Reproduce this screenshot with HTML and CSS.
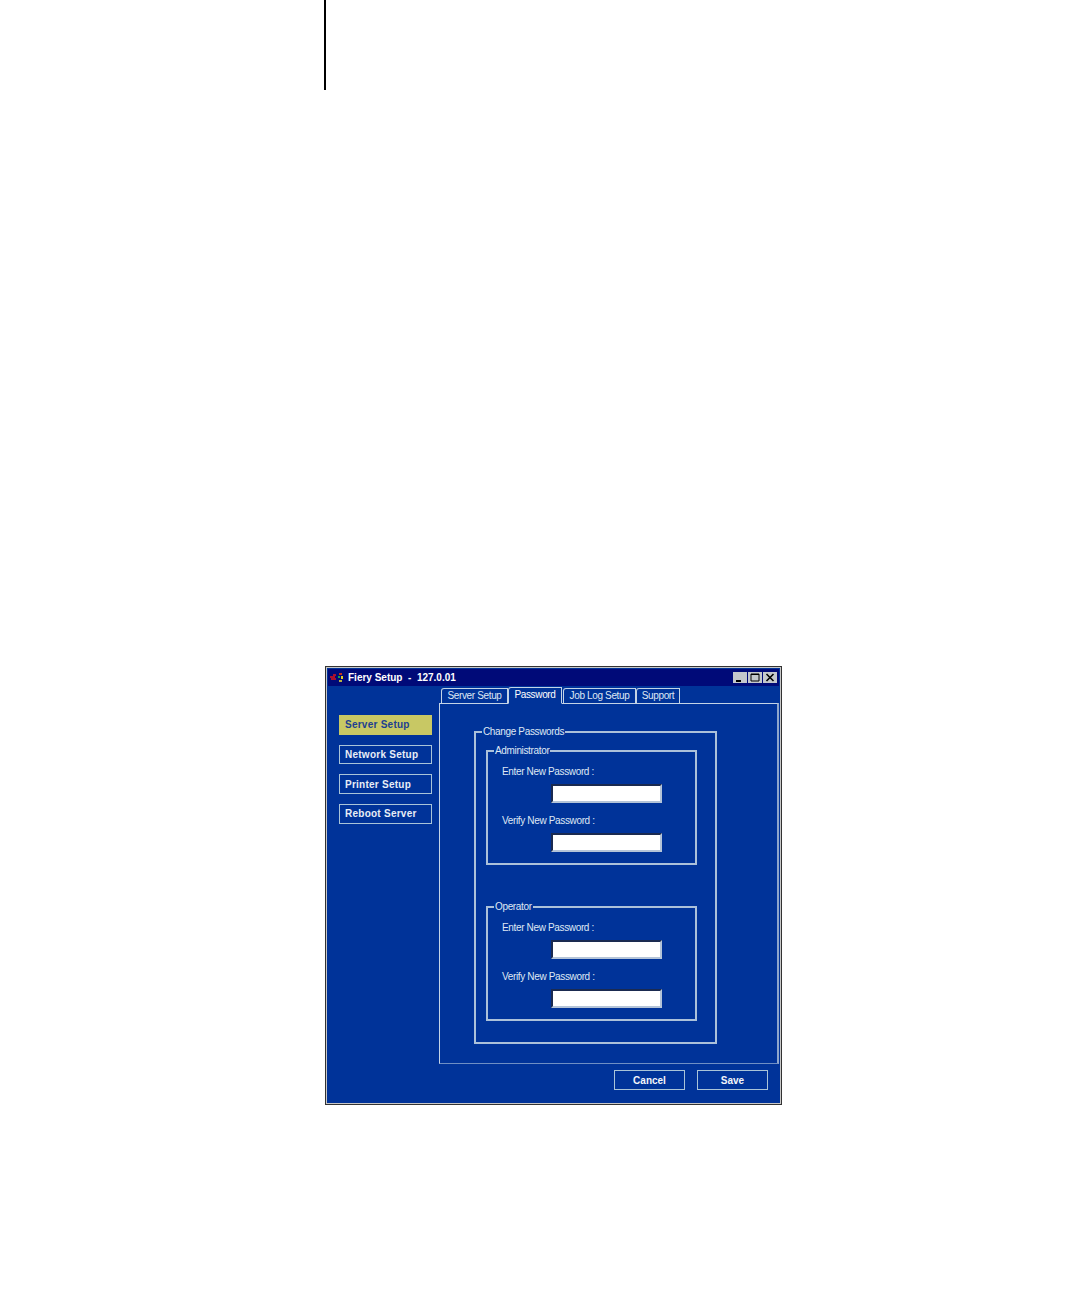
FILE: index.html
```html
<!DOCTYPE html>
<html lang="en">
<head>
    <meta charset="UTF-8">
    <title>Fiery Setup</title>
    <link rel="stylesheet" href="styles.css">
</head>
<body>
    <div class="crop-mark"></div>

    <div class="window">
        <div class="titlebar">
            <svg class="app-icon" width="16" height="11" viewBox="0 0 16 11">
                <path d="M1 5h5M2 7h5M4 3h3" stroke="#a81030" stroke-width="2" fill="none"/>
                <path d="M10 1h3v2h-3z" fill="#c03020"/>
                <path d="M9 4h2v2H9z" fill="#20a040"/>
                <path d="M12 4h2v3h-2z" fill="#e0d020"/>
                <path d="M10 8h3v2h-3z" fill="#b8b040"/>
            </svg>
            <span class="title">Fiery Setup&nbsp; -&nbsp; 127.0.01</span>
            <div class="win-buttons">
                <button class="win-btn">
                    <svg width="14" height="11" viewBox="0 0 14 11"><path d="M3 9h5" stroke="#000" stroke-width="2"/></svg>
                </button>
                <button class="win-btn">
                    <svg width="14" height="11" viewBox="0 0 14 11"><path d="M3 2h8v7H3z M3 2.5h8" stroke="#000" fill="none"/></svg>
                </button>
                <button class="win-btn">
                    <svg width="14" height="11" viewBox="0 0 14 11"><path d="M3.5 2l7 7M10.5 2l-7 7" stroke="#000" stroke-width="1.6"/></svg>
                </button>
            </div>
        </div>

        <div class="main">
            <div class="sidebar">
                <button class="side-btn active">Server Setup</button>
                <button class="side-btn">Network Setup</button>
                <button class="side-btn">Printer Setup</button>
                <button class="side-btn">Reboot Server</button>
            </div>

            <div class="content">
                <div class="tabs">
                    <div class="tab tab-server">Server Setup</div>
                    <div class="tab tab-password active">Password</div>
                    <div class="tab tab-joblog">Job Log Setup</div>
                    <div class="tab tab-support">Support</div>
                </div>
                <div class="panel">
                    <fieldset class="group-outer">
                        <legend>Change Passwords</legend>

                        <fieldset class="group-inner">
                            <legend>Administrator</legend>
                            <label class="field-label">Enter New Password :</label>
                            <input class="field-input" type="text">
                            <label class="field-label second">Verify New Password :</label>
                            <input class="field-input" type="text">
                        </fieldset>

                        <fieldset class="group-inner operator">
                            <legend>Operator</legend>
                            <label class="field-label">Enter New Password :</label>
                            <input class="field-input" type="text">
                            <label class="field-label second">Verify New Password :</label>
                            <input class="field-input" type="text">
                        </fieldset>
                    </fieldset>
                </div>
            </div>
        </div>

        <div class="actions">
            <button class="action-btn">Cancel</button>
            <button class="action-btn">Save</button>
        </div>
    </div>
</body>
</html>
```

FILE: styles.css
```css
* {
    margin: 0;
    padding: 0;
    box-sizing: border-box;
    font-family: 'Liberation Sans', Arial, sans-serif;
}

body {
    background-color: white;
    height: 1296px;
    overflow: hidden;
}

.crop-mark {
    width: 2px;
    height: 90px;
    margin-left: 324px;
    background-color: #000;
}

.window {
    width: 457px;
    height: 439px;
    margin: 576px 0 0 325px;
    border: 1px solid #333;
    box-shadow: inset -1px -1px 0 #c8c8c8, inset 1px 1px 0 #c8c8c8;
    background-color: #003399;
    padding: 2px 2px 0 2px;
    color: #dfe8f4;
}

/* title bar */
.titlebar {
    display: flex;
    align-items: center;
    height: 17px;
    background-color: #000a78;
    color: white;
    padding-left: 1px;
}

.app-icon {
    margin-right: 3px;
}

.title {
    font-size: 10px;
    font-weight: 700;
    white-space: nowrap;
}

.win-buttons {
    display: flex;
    gap: 1px;
    margin-left: auto;
    margin-right: 2px;
}

.win-btn {
    width: 14px;
    height: 11px;
    border: none;
    background-color: #c4c8cc;
    display: flex;
}

/* sidebar and tabs */
.main {
    display: flex;
}

.sidebar {
    width: 111px;
    padding: 29px 0 0 11px;
    display: flex;
    flex-direction: column;
    gap: 10.2px;
}

.side-btn {
    width: 93px;
    height: 19.5px;
    background-color: transparent;
    border: 1px solid #a9c4d8;
    color: #e8eef6;
    font-size: 10px;
    font-weight: 700;
    letter-spacing: 0.25px;
    text-align: left;
    padding-left: 5px;
}

.side-btn.active {
    background-color: #c8c864;
    border-color: #c8c864;
    color: #1d3f90;
}

.content {
    flex: 1;
}

.tabs {
    display: flex;
    align-items: flex-end;
    height: 17px;
    padding-left: 2px;
}

.tab {
    height: 15px;
    border: 1px solid #c4d4e6;
    border-bottom: none;
    border-top-left-radius: 3px;
    font-size: 10px;
    line-height: 14px;
    text-align: center;
    letter-spacing: -0.35px;
}

.tab-server { width: 67px; }
.tab-joblog { width: 73px; margin-left: 1px; }
.tab-support { width: 44px; }

.tab-password {
    width: 54px;
    height: 17px;
    line-height: 14px;
    border-bottom: 1px solid #003399;
    margin-bottom: -1px;
    position: relative;
    color: white;
}

.panel {
    height: 361px;
    border-top: 1px solid #c4d4e6;
    border-left: 1px solid #c4d4e6;
    border-right: 2px solid #8ea6cc;
    border-bottom: 1px solid #6f8fc4;
    padding: 22px 0 0 34px;
}

/* password groups */
fieldset {
    border: 2px solid #abc1da;
}

legend {
    font-size: 10px;
    line-height: 12px;
    letter-spacing: -0.35px;
    padding: 0 1px;
}

.group-outer {
    width: 243px;
    height: 318px;
    padding: 7px 0 0 10px;
}

.group-outer > legend {
    margin-left: -4px;
}

.group-inner {
    width: 211px;
    height: 120px;
    padding-left: 14px;
}

.group-inner > legend {
    margin-left: -8px;
}

.group-inner.operator {
    margin-top: 36px;
}

.field-label {
    display: block;
    font-size: 10px;
    line-height: 12px;
    letter-spacing: -0.35px;
    margin-top: 9px;
}

.field-label.second {
    margin-top: 12px;
}

.field-input {
    display: block;
    width: 111px;
    height: 19px;
    margin: 6px 0 0 49px;
    background-color: white;
    border: 2px solid;
    border-color: #1a2a50 #b4c4d8 #b4c4d8 #1a2a50;
    outline: none;
}

/* bottom buttons */
.actions {
    display: flex;
    justify-content: flex-end;
    gap: 12px;
    padding: 6px 11px 0 0;
}

.action-btn {
    width: 71px;
    height: 20px;
    background-color: transparent;
    border: 1px solid #a9c4d8;
    color: #f2f5fa;
    font-size: 10px;
    font-weight: 700;
}
```
